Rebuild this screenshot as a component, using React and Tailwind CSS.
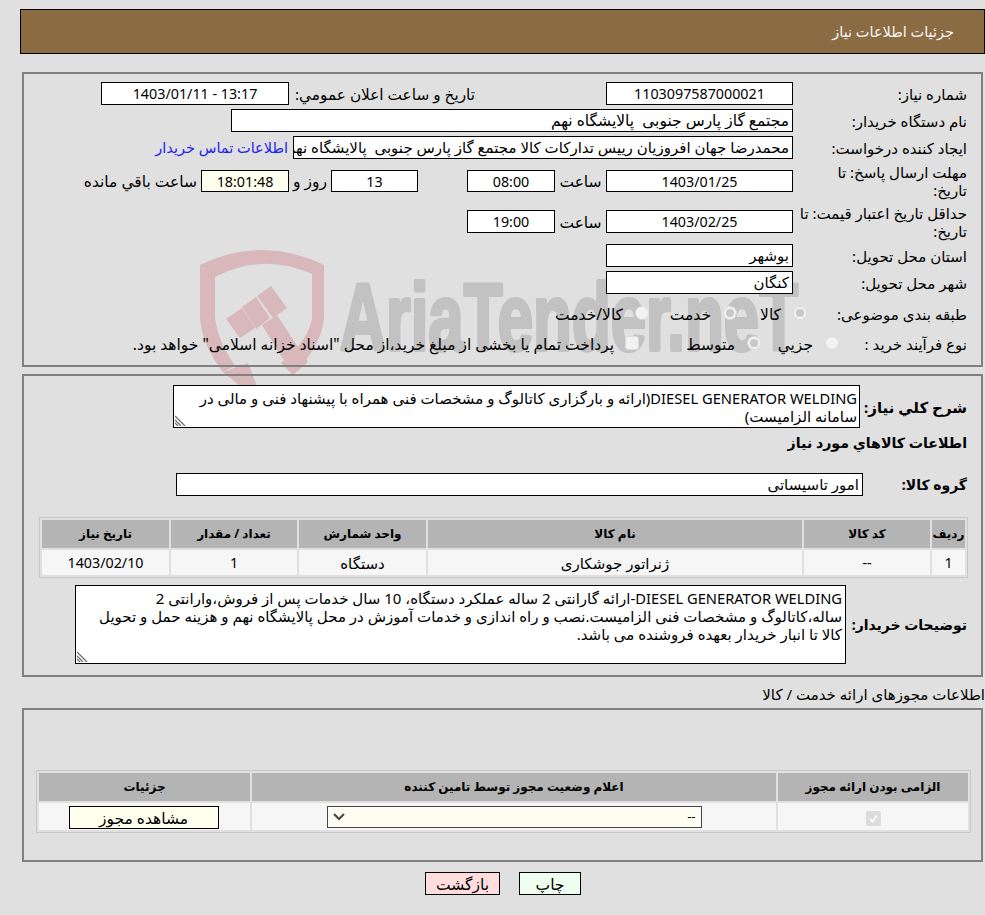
const FONT = "font-['Noto_Sans','DejaVu_Sans',sans-serif]";

function Field({ value, className = "", align = "text-center", bg = "bg-white", size = "text-[15px]" }) {
  return (
    <div className={`h-[23px] border border-black ${bg} ${align} ${size} px-[3px] leading-[21px] whitespace-pre overflow-hidden shrink-0 ${className}`}>
      {value}
    </div>
  );
}

function Num({ value, className = "", bg }) {
  return <Field value={value} className={className} bg={bg} size="text-[14.3px]" />;
}

function Label({ children, className = "", size = "text-[15.5px]" }) {
  return <div className={`${size} leading-[18px] whitespace-nowrap shrink-0 ${className}`}>{children}</div>;
}

function RowLabel({ children, className = "w-[174px]" }) {
  return <Label size="text-[15px]" className={className}>{children}</Label>;
}

function Radio({ checked, square }) {
  return (
    <span className={`w-[14px] h-[14px] ${square ? "rounded-[3px]" : "rounded-full"} border border-[#dcdcdc] bg-[#f2f2f2] flex items-center justify-center shrink-0 -mt-[3px]`}>
      {checked && <span className="w-[8px] h-[8px] rounded-full bg-[#c8c8c8]" />}
    </span>
  );
}

function Watermark() {
  return (
    <svg className="absolute left-[190px] top-[240px] pointer-events-none [direction:ltr]" width="630" height="150" viewBox="190 240 630 150">
      <g fill="#d8b8bb">
        <path fillRule="evenodd" d="M200 265 Q262 235 324 265 L324 318 Q322 345 293 375 L281 363 Q309 340 312 318 L312 274 Q262 252 215 277 L215 318 Q218 342 235 366 L223 372 Q202 345 200 318 Z" />
        <path d="M226 319 L242 308 L255 328 L240 338 Z M242 307 L256 297 L270 318 L256 329 Z M257 296 L271 286 L287 308 L273 318 Z" />
        <path d="M262 325 L277 315 L308 362 L293 375 Z" />
        <path d="M223 372 L248 363 L257 386 L240 386 Z" />
      </g>
      <text x="340" y="350" direction="ltr" fontFamily="'Liberation Sans', sans-serif" fontWeight="700" fontSize="95" fill="#c2c2c2" stroke="#c2c2c2" strokeWidth="4" strokeLinejoin="round" textLength="458" lengthAdjust="spacingAndGlyphs">AriaTender.neT</text>
    </svg>
  );
}

function InfoPanel() {
  return (
    <section className="mx-[2px] h-[295px] border-2 border-[#808080] pt-[8px] pr-[14px] flex flex-col">
      <div className="flex items-center h-[23px]">
        <RowLabel>شماره نياز:</RowLabel>
        <Num value="1103097587000021" className="w-[187px]" />
        <Label className="w-[186px] mr-[131px]" size="text-[15.3px]">تاريخ و ساعت اعلان عمومي:</Label>
        <Num value={<span dir="ltr">1403/01/11 - 13:17</span>} className="w-[188px]" />
      </div>
      <div className="flex items-center h-[23px] mt-[4px]">
        <RowLabel>نام دستگاه خریدار:</RowLabel>
        <Field value="مجتمع گاز پارس جنوبی  پالایشگاه نهم" align="text-right" size="text-[15.5px]" className="w-[562px]" />
      </div>
      <div className="flex items-center h-[23px] mt-[4px]">
        <RowLabel>ايجاد کننده درخواست:</RowLabel>
        <Field value="محمدرضا جهان افروزیان رییس تدارکات کالا مجتمع گاز پارس جنوبی  پالایشگاه نهم" align="text-right" className="w-[500px]" />
        <a className="text-[#2222ee] text-[14.5px] mr-[5px] whitespace-nowrap">اطلاعات تماس خریدار</a>
      </div>
      <div className="flex items-center h-[34px] mt-[5px]">
        <RowLabel>مهلت ارسال پاسخ: تا<br />تاریخ:</RowLabel>
        <Num value="1403/01/25" className="w-[187px] !h-[22px]" />
        <Label className="w-[51px] text-center">ساعت</Label>
        <Num value="08:00" className="w-[88px] !h-[22px]" />
        <Num value="13" className="w-[87px] mr-[49px] !h-[22px]" />
        <Label className="w-[42px] text-center">روز و</Label>
        <Num value="18:01:48" bg="bg-[#ffffee]" className="w-[88px] !h-[22px]" />
        <Label className="mr-[4px]">ساعت باقي مانده</Label>
      </div>
      <div className="flex items-center h-[35px] mt-[6px]">
        <RowLabel>حداقل تاريخ اعتبار قيمت: تا<br />تاریخ:</RowLabel>
        <Num value="1403/02/25" className="w-[187px]" />
        <Label className="w-[51px] text-center">ساعت</Label>
        <Num value="19:00" className="w-[88px]" />
      </div>
      <div className="flex items-center h-[23px] mt-[5px]">
        <RowLabel>استان محل تحویل:</RowLabel>
        <Field value="بوشهر" align="text-right" className="w-[187px]" />
      </div>
      <div className="flex items-center h-[23px] mt-[4px]">
        <RowLabel>شهر محل تحویل:</RowLabel>
        <Field value="کنگان" align="text-right" className="w-[187px]" />
      </div>
      <div className="flex items-center h-[23px] mt-[9px]">
        <RowLabel className="w-[160px] -mt-[2px]">طبقه بندی موضوعی:</RowLabel>
        <Radio checked />
        <Label className="mr-[12px] w-[44px] -mt-[2px]">کالا</Label>
        <Radio checked />
        <Label className="mr-[12px] w-[62px] -mt-[2px]">خدمت</Label>
        <Radio />
        <Label className="mr-[12px] -mt-[2px]">کالا/خدمت</Label>
      </div>
      <div className="flex items-center h-[23px] mt-[7px]">
        <RowLabel className="w-[128px] -mt-[2px]">نوع فرآیند خرید :</RowLabel>
        <Radio />
        <Label className="mr-[12px] w-[52px] -mt-[2px]">جزیي</Label>
        <Radio checked />
        <Label className="mr-[12px] w-[96px] -mt-[2px]">متوسط</Label>
        <Radio square />
        <Label className="mr-[11px] -mt-[2px]">پرداخت تمام یا بخشی از مبلغ خرید،از محل "اسناد خزانه اسلامی" خواهد بود.</Label>
      </div>
    </section>
  );
}

function Resize() {
  return (
    <svg className="absolute left-[1px] bottom-[1px]" width="11" height="11" viewBox="0 0 11 11" stroke="#666" strokeWidth="1.2">
      <path d="M0 1 L10 11 M0 5 L6 11 M0 8 L3 11" />
    </svg>
  );
}

function GoodsTable() {
  const th = "bg-[#b4b4b4] h-[28px] text-[12px] font-bold text-center p-0";
  const td = "bg-[#f6f6f6] h-[25px] text-[15px] text-center p-0 leading-[18px]";
  const num = "bg-[#f6f6f6] h-[25px] text-[14.3px] text-center p-0 leading-[18px]";
  return (
    <div className="mr-[13px] ml-[15px] mt-[21px] border border-[#c8c8c8]">
      <table className="w-full border-separate border-spacing-[2px] table-fixed">
        <colgroup>
          <col className="w-[33px]" />
          <col className="w-[126px]" />
          <col className="w-[374px]" />
          <col className="w-[127px]" />
          <col className="w-[126px]" />
          <col />
        </colgroup>
        <thead>
          <tr>
            <th className={th}>ردیف</th>
            <th className={th}>کد کالا</th>
            <th className={th}>نام کالا</th>
            <th className={th}>واحد شمارش</th>
            <th className={th}>تعداد / مقدار</th>
            <th className={th}>تاریخ نیاز</th>
          </tr>
        </thead>
        <tbody>
          <tr>
            <td className={num}>1</td>
            <td className={num}>--</td>
            <td className={td}>ژنراتور جوشکاری</td>
            <td className={td}>دستگاه</td>
            <td className={num}>1</td>
            <td className={num}>1403/02/10</td>
          </tr>
        </tbody>
      </table>
    </div>
  );
}

function DescPanel() {
  return (
    <section className="mx-[2px] mt-[7px] h-[303px] border-2 border-[#808080] pt-[9px] flex flex-col">
      <div className="flex items-center pr-[14px]">
        <div className="w-[107px] text-[15px] font-bold shrink-0 leading-[20px] whitespace-nowrap">شرح كلي نياز:</div>
        <div className="relative w-[687px] h-[43px] border border-black bg-white px-[2px] pt-[3px] text-[15px] leading-[18px] whitespace-nowrap overflow-hidden">
          <span className="text-[14.7px]">DIESEL GENERATOR WELDING</span>(ارائه و بارگزاری کاتالوگ و مشخصات فنی همراه با پیشنهاد فنی و مالی در<br />سامانه الزامیست)
          <Resize />
        </div>
      </div>
      <div className="pr-[14px] mt-[5px] text-[14.2px] font-bold leading-[20px]">اطلاعات کالاهاي مورد نياز</div>
      <div className="flex items-center pr-[14px] mt-[20px]">
        <div className="w-[104px] text-[14px] font-bold shrink-0 leading-[20px]">گروه کالا:</div>
        <Field value="امور تاسیساتی" align="text-right" className="w-[687px]" />
      </div>
      <GoodsTable />
      <div className="flex items-center pr-[14px] mt-[7px]">
        <div className="w-[121px] text-[14px] font-bold shrink-0 leading-[20px] whitespace-nowrap">توضیحات خریدار:</div>
        <div className="relative w-[771px] h-[79px] border border-black bg-white px-[3px] pt-[3px] text-[15px] leading-[18px] whitespace-nowrap overflow-hidden">
          <span className="text-[14.7px]">DIESEL GENERATOR WELDING</span>-ارائه گارانتی 2 ساله عملکرد دستگاه، 10 سال خدمات پس از فروش،وارانتی 2<br />ساله،کاتالوگ و مشخصات فنی الزامیست.نصب و راه اندازی و خدمات آموزش در محل پالایشگاه نهم و هزینه حمل و تحویل<br />کالا تا انبار خریدار بعهده فروشنده می باشد.
          <Resize />
        </div>
      </div>
    </section>
  );
}

function LicensePanel() {
  const th = "bg-[#b4b4b4] h-[28px] text-[12px] font-bold text-center p-0";
  const td = "bg-[#f6f6f6] h-[27px] text-center p-0 align-middle";
  return (
    <section className="mx-[2px] h-[154px] border-2 border-[#808080] pt-[60px] pr-[10px] pl-[12px]">
      <div className="border border-[#c8c8c8]">
        <table className="w-full border-separate border-spacing-[2px] table-fixed">
          <colgroup>
            <col className="w-[190px]" />
            <col className="w-[524px]" />
            <col />
          </colgroup>
          <thead>
            <tr>
              <th className={th}>الزامی بودن ارائه مجوز</th>
              <th className={th}>اعلام وضعیت مجوز توسط تامین کننده</th>
              <th className={th}>جزئیات</th>
            </tr>
          </thead>
          <tbody>
            <tr>
              <td className={td}>
                <span className="inline-flex w-[15px] h-[15px] rounded-[2px] bg-[#dcdcdc] items-center justify-center align-middle">
                  <svg width="11" height="11" viewBox="0 0 11 11" fill="none" stroke="#fafafa" strokeWidth="2"><path d="M2 6 L4.5 8.5 L9 2.5" /></svg>
                </span>
              </td>
              <td className={td}>
                <div className="mx-auto w-[375px] h-[22px] border border-[#444] bg-[#fdfdf2] flex items-center justify-between px-[5px] text-[13px]">
                  <span>--</span>
                  <svg width="12" height="8" viewBox="0 0 12 8" fill="none" stroke="#444" strokeWidth="2"><path d="M1 1 L6 6 L11 1" /></svg>
                </div>
              </td>
              <td className={td}>
                <button className="w-[150px] h-[23px] mr-[2px] border border-black bg-[#ffffee] text-[15.5px] leading-[20px] align-middle">مشاهده مجوز</button>
              </td>
            </tr>
          </tbody>
        </table>
      </div>
    </section>
  );
}

export default function App() {
  return (
    <div dir="rtl" className={`relative w-[985px] h-[915px] bg-[#e0e0e0] text-black overflow-hidden pt-[9px] ${FONT}`}>
      <Watermark />
      <div className="relative">
        <header className="ml-[20px] h-[45px] bg-[#8b6b42] border border-black flex items-center pr-[30px] text-[#f5f5f5] text-[14.5px]">
          جزئیات اطلاعات نیاز
        </header>
        <div className="mt-[18px] ml-[20px]">
          <InfoPanel />
          <DescPanel />
          <div className="h-[31px] text-[15px] leading-[34px] whitespace-nowrap">اطلاعات مجوزهای ارائه خدمت / کالا</div>
          <LicensePanel />
          <div className="flex gap-[19px] mt-[10px] pr-[404px]">
            <button className="w-[62px] h-[23px] border border-black bg-[#efffef] text-[15.5px]">چاپ</button>
            <button className="w-[75px] h-[23px] border border-black bg-[#ffdddd] text-[15.5px]">بازگشت</button>
          </div>
        </div>
      </div>
    </div>
  );
}
